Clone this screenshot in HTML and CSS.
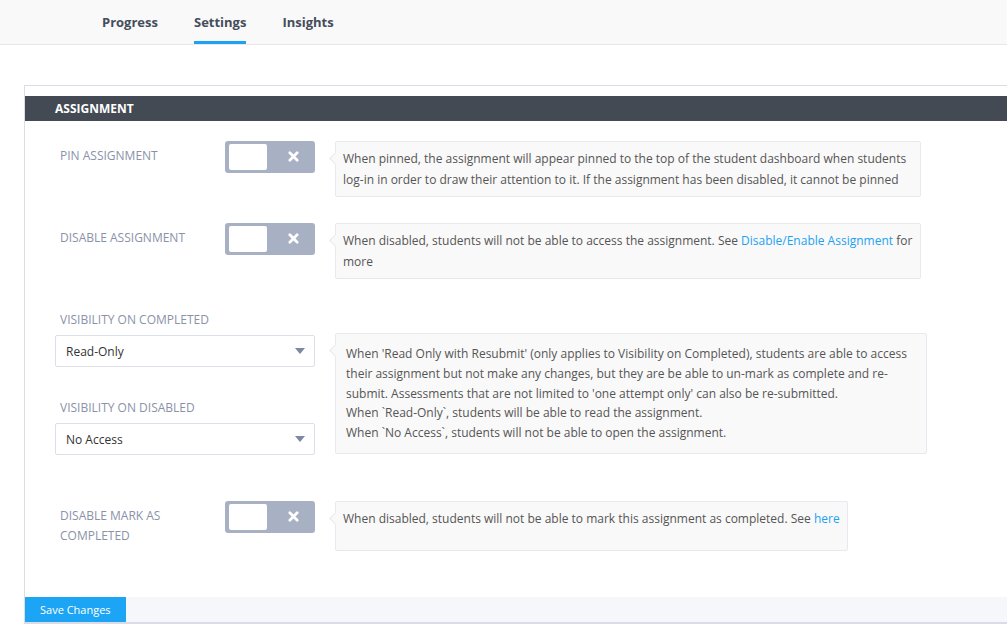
FILE: index.html
```html
<!DOCTYPE html>
<html>
<head>
<meta charset="utf-8">
<link rel="stylesheet" href="styles.css">
</head>
<body>
<div class="page">
  <header class="topbar">
    <nav class="tabs">
      <a class="tab">Progress</a>
      <a class="tab active">Settings</a>
      <a class="tab">Insights</a>
    </nav>
  </header>

  <section class="panel">
    <div class="bar">ASSIGNMENT</div>
    <div class="body">
      <div class="row row-first">
        <div class="label">PIN ASSIGNMENT</div>
        <div class="toggle"><span class="knob"></span><svg class="x" viewBox="0 0 12 12" width="11" height="11"><path d="M2 2 L10 10 M10 2 L2 10" stroke="#fff" stroke-width="3" stroke-linecap="round"/></svg></div>
        <div class="help help-wide">When pinned, the assignment will appear pinned to the top of the student dashboard when students log-in in order to draw their attention to it. If the assignment has been disabled, it cannot be pinned</div>
      </div>

      <div class="row row-gap">
        <div class="label">DISABLE ASSIGNMENT</div>
        <div class="toggle"><span class="knob"></span><svg class="x" viewBox="0 0 12 12" width="11" height="11"><path d="M2 2 L10 10 M10 2 L2 10" stroke="#fff" stroke-width="3" stroke-linecap="round"/></svg></div>
        <div class="help help-wide">When disabled, students will not be able to access the assignment. See <a class="link">Disable/Enable Assignment</a> for more</div>
      </div>

      <div class="row-vis">
        <div class="vis-col">
          <div class="vis-label">VISIBILITY ON COMPLETED</div>
          <div class="select"><span>Read-Only</span><span class="caret"></span></div>
          <div class="vis-label vis-label-2">VISIBILITY ON DISABLED</div>
          <div class="select"><span>No Access</span><span class="caret"></span></div>
        </div>
        <div class="help help-vis">When 'Read Only with Resubmit' (only applies to Visibility on Completed), students are able to access their assignment but not make any changes, but they are be able to un-mark as complete and re-submit. Assessments that are not limited to 'one attempt only' can also be re-submitted.<br>When `Read-Only`, students will be able to read the assignment.<br>When `No Access`, students will not be able to open the assignment.</div>
      </div>

      <div class="row row-last">
        <div class="label">DISABLE MARK AS COMPLETED</div>
        <div class="toggle"><span class="knob"></span><svg class="x" viewBox="0 0 12 12" width="11" height="11"><path d="M2 2 L10 10 M10 2 L2 10" stroke="#fff" stroke-width="3" stroke-linecap="round"/></svg></div>
        <div class="help help-mark">When disabled, students will not be able to mark this assignment as completed. See <a class="link">here</a></div>
      </div>
    </div>
    <div class="footer">
      <button class="save">Save Changes</button>
    </div>
  </section>
</div>
</body>
</html>
```

FILE: styles.css
```css
* { box-sizing: border-box; }
html, body { margin: 0; padding: 0; background: #fff; }
body {
  font-family: "Open Sans", "Liberation Sans", sans-serif;
  font-size: 12px;
  color: #555;
}
.page { width: 1007px; height: 634px; overflow: hidden; }

.topbar {
  height: 45px;
  background: #f9f9f9;
  border-bottom: 1px solid #e6e6ee;
}
.tabs {
  display: flex;
  gap: 36px;
  padding-left: 102px;
  height: 44px;
}
.tab {
  display: flex;
  align-items: center;
  height: 44px;
  font-size: 13px;
  font-weight: 700;
  color: #454d5b;
  border-bottom: 3px solid transparent;
  padding-top: 2px;
}
.tab.active { border-bottom-color: #1da1f2; }

.panel {
  margin: 40px -60px 0 24px;
  border: 1px solid #dcdce6;
  border-right: none;
  padding-top: 10px;
}
.bar {
  height: 25px;
  background: #434a54;
  color: #fff;
  font-weight: 700;
  font-size: 12px;
  line-height: 25px;
  padding-left: 30px;
}
.body { padding: 20px 0 46px 30px; }

.row {
  display: flex;
  align-items: flex-start;
}
.row-gap { margin-top: 26px; }
.row-last { margin-top: 46px; }
.label {
  width: 170px;
  padding: 5px 25px 0 5px;
  line-height: 20px;
  color: #8a92a8;
  font-size: 12px;
}
.toggle {
  position: relative;
  width: 90px;
  height: 32px;
  background: #a8b0c3;
  border-radius: 3px;
  flex: none;
  margin-right: 20px;
}
.knob {
  position: absolute;
  left: 4px;
  top: 3px;
  width: 38px;
  height: 26px;
  background: #fff;
  border-radius: 2px;
}
.x {
  position: absolute;
  left: 63px;
  top: 10px;
}

.help {
  position: relative;
  background: #f9f9f9;
  border: 1px solid #e8e8ee;
  border-radius: 2px;
  padding: 6px 3px 6px 7px;
  line-height: 21px;
  color: #555;
  font-size: 12px;
}
.help::before {
  content: "";
  position: absolute;
  left: -5px;
  top: 12px;
  width: 8px;
  height: 8px;
  background: #f9f9f9;
  border-left: 1px solid #e8e8ee;
  border-bottom: 1px solid #e8e8ee;
  transform: rotate(45deg);
}
.help-wide { width: 586px; }
.help-mark { width: 513px; min-height: 50px; }
.help-vis {
  width: 592px;
  margin-top: 23px;
  padding: 10px 8px 10px 10px;
  line-height: 19.8px;
}
.link { color: #1da1f2; text-decoration: none; }

.row-vis {
  display: flex;
  align-items: flex-start;
  margin-top: 31px;
}
.vis-col { width: 260px; margin-right: 20px; }
.vis-label {
  height: 20px;
  line-height: 20px;
  padding-left: 5px;
  color: #8a92a8;
  margin-bottom: 5px;
}
.vis-label-2 { margin-top: 31px; }
.select {
  display: flex;
  align-items: center;
  justify-content: space-between;
  height: 32px;
  border: 1px solid #dcdfe8;
  border-radius: 2px;
  background: #fff;
  padding: 0 9px 0 10px;
  color: #333;
}
.caret {
  width: 0;
  height: 0;
  border-left: 5px solid transparent;
  border-right: 5px solid transparent;
  border-top: 6px solid #7d88a3;
}

.footer {
  height: 26px;
  background: #f6f7fb;
  border-bottom: 1px solid #dcdce6;
}
.save {
  display: block;
  height: 25px;
  border: none;
  background: #1da5f5;
  color: #fff;
  font-family: "Open Sans", "Liberation Sans", sans-serif;
  font-size: 11px;
  padding: 0 15px;
  margin: 0;
  line-height: 25px;
}
```
